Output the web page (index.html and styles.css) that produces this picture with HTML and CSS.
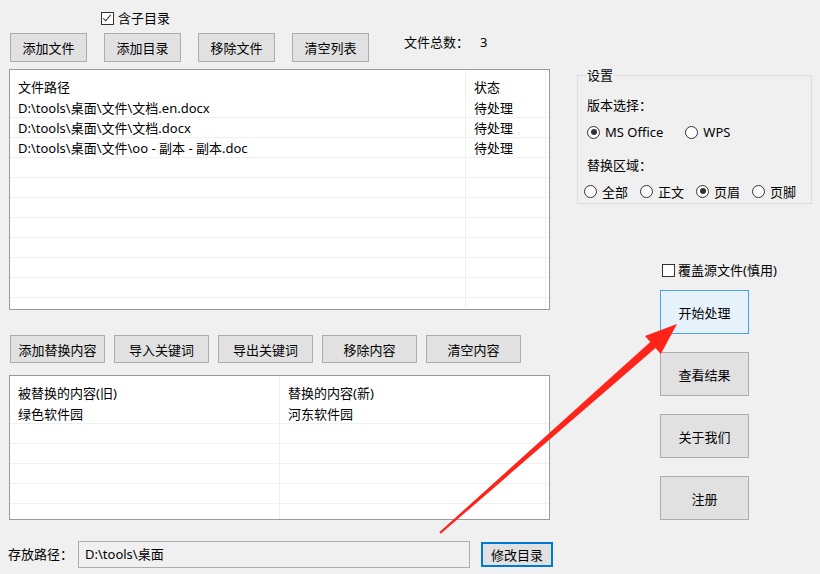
FILE: index.html
```html
<!DOCTYPE html>
<html lang="zh-CN">
<head>
  <meta charset="UTF-8">
  <title>Word 批量替换</title>
  <link rel="stylesheet" href="styles.css">
</head>
<body>
  <div class="window">
    <div class="left">
      <div class="check top-check"><span class="box checked"></span>含子目录</div>

      <div class="toolbar">
        <button class="btn">添加文件</button>
        <button class="btn">添加目录</button>
        <button class="btn">移除文件</button>
        <button class="btn">清空列表</button>
        <span class="count-label">文件总数：</span>
        <span class="count">3</span>
      </div>

      <div class="list files">
        <div class="row head"><span>文件路径</span><span>状态</span><span></span></div>
        <div class="row"><span>D:\tools\桌面\文件\文档.en.docx</span><span>待处理</span><span></span></div>
        <div class="row"><span>D:\tools\桌面\文件\文档.docx</span><span>待处理</span><span></span></div>
        <div class="row"><span>D:\tools\桌面\文件\oo - 副本 - 副本.doc</span><span>待处理</span><span></span></div>
        <div class="row"><span></span><span></span><span></span></div>
        <div class="row"><span></span><span></span><span></span></div>
        <div class="row"><span></span><span></span><span></span></div>
        <div class="row"><span></span><span></span><span></span></div>
        <div class="row"><span></span><span></span><span></span></div>
        <div class="row"><span></span><span></span><span></span></div>
        <div class="row"><span></span><span></span><span></span></div>
        <div class="row"><span></span><span></span><span></span></div>
      </div>

      <div class="toolbar second">
        <button class="btn wide">添加替换内容</button>
        <button class="btn wide">导入关键词</button>
        <button class="btn wide">导出关键词</button>
        <button class="btn wide">移除内容</button>
        <button class="btn wide">清空内容</button>
      </div>

      <div class="list words">
        <div class="row head"><span>被替换的内容(旧)</span><span>替换的内容(新)</span><span></span></div>
        <div class="row"><span>绿色软件园</span><span>河东软件园</span><span></span></div>
        <div class="row"><span></span><span></span><span></span></div>
        <div class="row"><span></span><span></span><span></span></div>
        <div class="row"><span></span><span></span><span></span></div>
        <div class="row"><span></span><span></span><span></span></div>
        <div class="row"><span></span><span></span><span></span></div>
      </div>

      <div class="path-row">
        <span class="path-label">存放路径：</span>
        <div class="path-input">D:\tools\桌面</div>
        <button class="btn focus">修改目录</button>
      </div>
    </div>

    <div class="right">
      <fieldset class="settings">
        <legend>设置</legend>
        <div class="field-label">版本选择：</div>
        <div class="radios version">
          <span class="radio-item"><span class="radio on"></span>MS Office</span>
          <span class="radio-item"><span class="radio"></span>WPS</span>
        </div>
        <div class="field-label area-label">替换区域：</div>
        <div class="radios area">
          <span class="radio-item"><span class="radio"></span>全部</span>
          <span class="radio-item"><span class="radio"></span>正文</span>
          <span class="radio-item"><span class="radio on"></span>页眉</span>
          <span class="radio-item"><span class="radio"></span>页脚</span>
        </div>
      </fieldset>

      <div class="check overwrite"><span class="box"></span>覆盖源文件(慎用)</div>

      <div class="actions">
        <button class="btn big active">开始处理</button>
        <button class="btn big">查看结果</button>
        <button class="btn big">关于我们</button>
        <button class="btn big">注册</button>
      </div>
    </div>
  </div>

  <svg class="arrow" width="820" height="574" viewBox="0 0 820 574">
    <polygon fill="#ff2419" points="439.3,532.2 440.7,533.8 655.5,348.1 660.8,354.1 677,324 645,336.1 650.3,342.1"/>
  </svg>
</body>
</html>
```

FILE: styles.css
```css
body {
  margin: 0;
  background-color: #f0f0f0;
  font-family: "Noto Sans", "Noto Sans CJK SC", sans-serif;
  font-size: 13px;
  color: #000;
}

.window {
  display: flex;
  width: 820px;
  height: 574px;
  overflow: hidden;
}

.left {
  width: 541px;
  padding-left: 9px;
  display: flex;
  flex-direction: column;
}

.left > *,
.right > * {
  flex-shrink: 0;
}

.right {
  flex: 1;
  padding-left: 27px;
  display: flex;
  flex-direction: column;
}

/* checkbox */
.check {
  display: flex;
  align-items: center;
  gap: 4px;
  height: 16px;
  line-height: 16px;
  white-space: nowrap;
}

.box {
  width: 11px;
  height: 11px;
  border: 1px solid #333;
  background: #fff;
  position: relative;
}

.box.checked::after {
  content: "";
  position: absolute;
  left: 3px;
  top: 0px;
  width: 3px;
  height: 7px;
  border: solid #333;
  border-width: 0 1.4px 1.4px 0;
  transform: rotate(40deg);
}

.top-check {
  margin-top: 10px;
  padding-left: 92px;
}

/* buttons */
.btn {
  font: inherit;
  color: #000;
  background: #e1e1e1;
  border: 1px solid #adadad;
  padding: 0;
  width: 77px;
  height: 29px;
  white-space: nowrap;
}

.toolbar {
  display: flex;
  gap: 17px;
  margin-top: 7px;
  padding-left: 1px;
}

.count-label {
  margin-left: 18px;
  line-height: 18px;
}

.count {
  margin-left: -6px;
  line-height: 18px;
}

.toolbar.second {
  gap: 9px;
  margin-top: 25px;
}

.btn.wide {
  width: 95px;
  height: 28px;
}

/* list views */
.list {
  background: #fff;
  border: 1px solid #9a9a9a;
  overflow: hidden;
  margin-top: 7px;
}

.files {
  height: 239px;
}

.words {
  height: 143px;
  margin-top: 12px;
}

.row {
  display: grid;
  height: 20px;
  line-height: 20px;
  border-bottom: 1px solid #f0f0f0;
  box-sizing: border-box;
}

.files .row {
  grid-template-columns: 456px 80px 1fr;
}

.words .row {
  grid-template-columns: 270px 266px 1fr;
}

.row span {
  padding-left: 8px;
  white-space: nowrap;
  overflow: hidden;
  border-right: 1px solid #f0f0f0;
}

.row span:last-child {
  border-right: none;
}

.row.head {
  height: 28px;
  border-bottom: none;
}

.row.head span {
  padding-top: 7px;
  line-height: 20px;
}

/* path */
.path-row {
  display: flex;
  align-items: center;
  margin-top: 21px;
  margin-left: -1px;
}

.path-label {
  white-space: nowrap;
  flex-shrink: 0;
  margin-top: -3px;
}

.path-input {
  width: 384px;
  height: 25px;
  line-height: 25px;
  border: 1px solid #adadad;
  padding-left: 6px;
  margin-left: 5px;
  flex-shrink: 0;
}

.btn.focus {
  width: 72px;
  height: 25px;
  border: 2px solid #0078d7;
  margin-left: 11px;
  flex-shrink: 0;
}

/* settings group */
.settings {
  width: 224px;
  margin: 67px 0 0;
  padding: 0 0 3px 9px;
  border: 1px solid #dcdcdc;
  box-sizing: content-box;
}

.settings legend {
  padding: 0 1px;
  margin-left: -1px;
  line-height: 16px;
}

.field-label {
  line-height: 18px;
  margin-top: 13px;
}

.radios {
  display: flex;
  align-items: center;
  height: 18px;
  white-space: nowrap;
}

.version {
  margin-top: 9px;
  gap: 22px;
}

.field-label.area-label {
  margin-top: 15px;
}

.area {
  margin-top: 8px;
  margin-left: -3px;
  gap: 12px;
}

.radio-item {
  display: flex;
  align-items: center;
  gap: 5px;
}

.radio {
  width: 11px;
  height: 11px;
  border: 1px solid #333;
  border-radius: 50%;
  background: #fff;
  position: relative;
}

.radio.on::after {
  content: "";
  position: absolute;
  left: 2.5px;
  top: 2.5px;
  width: 6px;
  height: 6px;
  border-radius: 50%;
  background: #333;
}

/* right side */
.overwrite {
  margin-top: 58px;
  margin-left: 85px;
  gap: 3px;
}

.actions {
  display: flex;
  flex-direction: column;
  gap: 18px;
  margin-top: 12px;
  margin-left: 83px;
}

.btn.big {
  width: 89px;
  height: 44px;
}

.btn.active {
  background: #e5f1fb;
  border-color: #4ea0e6;
}

.arrow {
  position: absolute;
  left: 0;
  top: 0;
  pointer-events: none;
}
```
